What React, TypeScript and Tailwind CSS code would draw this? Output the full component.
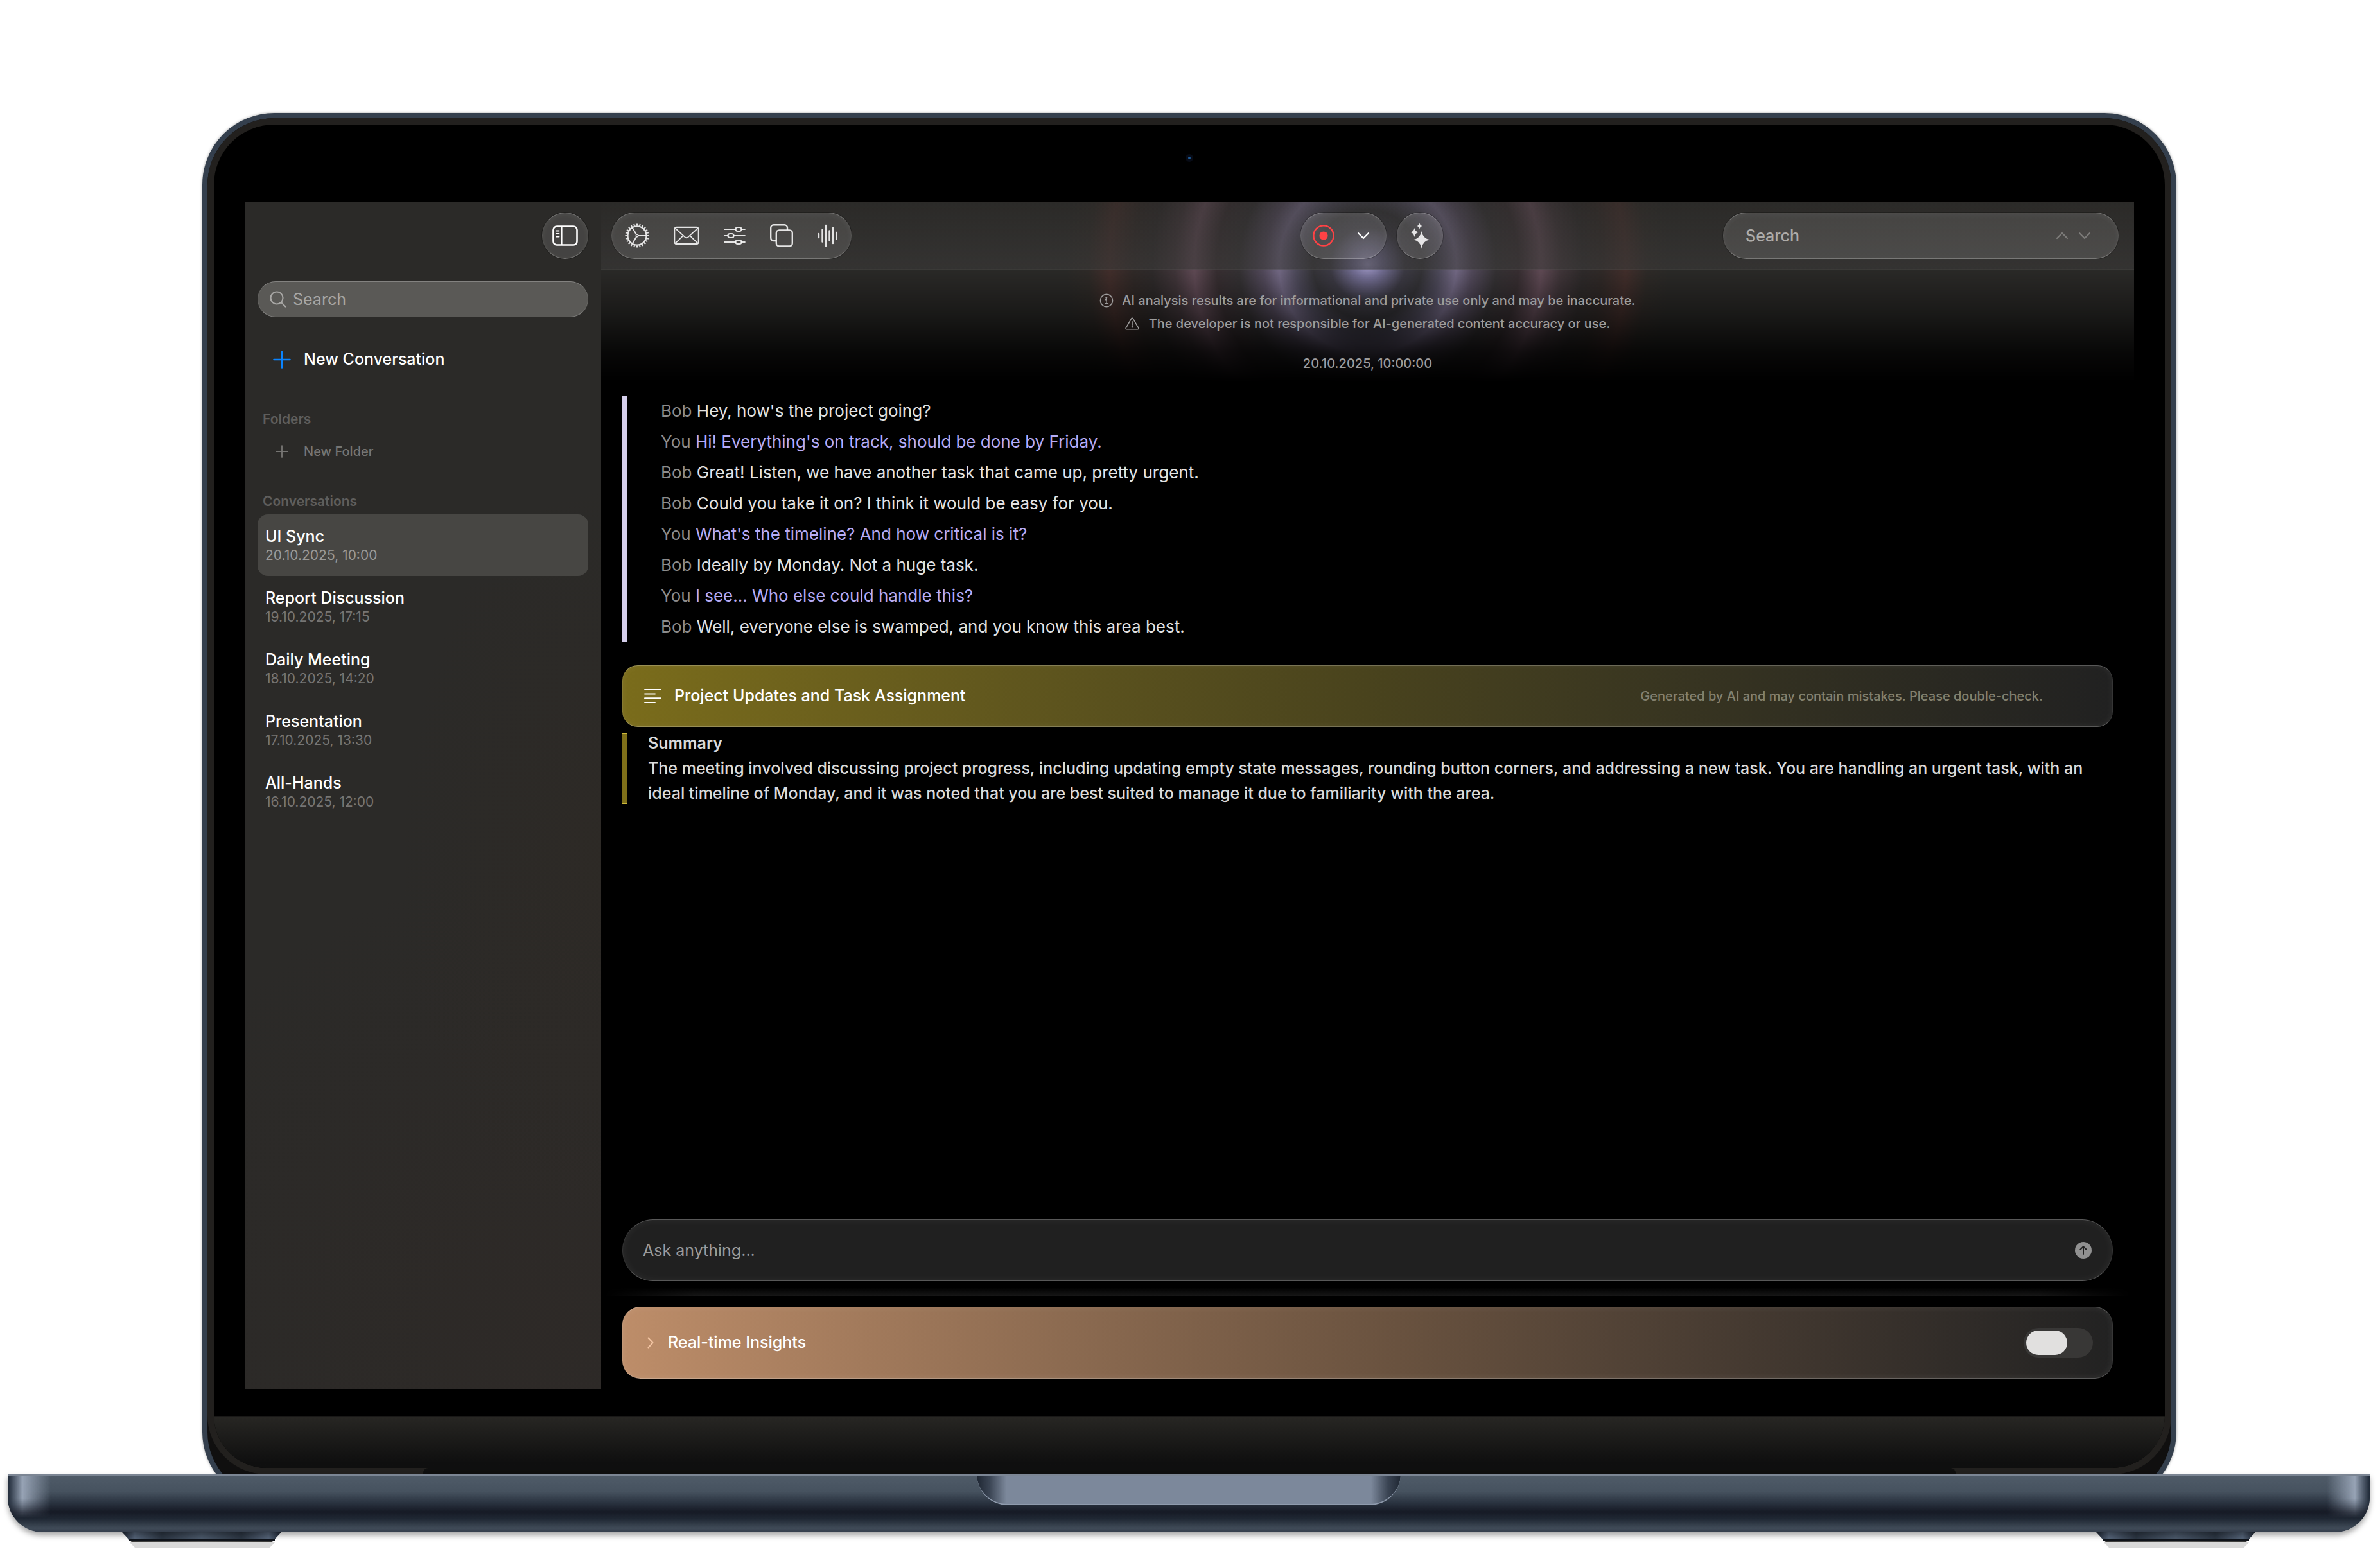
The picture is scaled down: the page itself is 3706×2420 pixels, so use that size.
import { useState } from 'react';
import type { ReactNode } from 'react';

type Message = { who: "Bob" | "You"; text: string };

const messages: Message[] = [
  { who: "Bob", text: "Hey, how's the project going?" },
  { who: "You", text: "Hi! Everything's on track, should be done by Friday." },
  { who: "Bob", text: "Great! Listen, we have another task that came up, pretty urgent." },
  { who: "Bob", text: "Could you take it on? I think it would be easy for you." },
  { who: "You", text: "What's the timeline? And how critical is it?" },
  { who: "Bob", text: "Ideally by Monday. Not a huge task." },
  { who: "You", text: "I see... Who else could handle this?" },
  { who: "Bob", text: "Well, everyone else is swamped, and you know this area best." },
];

const conversations = [
  { title: "UI Sync", date: "20.10.2025, 10:00" },
  { title: "Report Discussion", date: "19.10.2025, 17:15" },
  { title: "Daily Meeting", date: "18.10.2025, 14:20" },
  { title: "Presentation", date: "17.10.2025, 13:30" },
  { title: "All-Hands", date: "16.10.2025, 12:00" },
];

const glass =
  "border border-x-white/8 border-y-white/25 bg-white/12 shadow-[inset_0_2px_8px_rgba(255,255,255,0.06),0_0_0_1px_rgba(0,0,0,0.25)]";

/* ---------- icons ---------- */

function SidebarIcon() {
  return (
    <svg width="40" height="32" viewBox="0 0 40 32" fill="none" stroke="currentColor" strokeWidth="2.6" strokeLinecap="round">
      <rect x="1.5" y="1.5" width="37" height="29" rx="5.5" />
      <path d="M14.5 2v28" strokeWidth="2.2" />
      <path d="M6 8.5h4.5M6 13h4.5M6 17.5h4.5" strokeWidth="1.8" />
    </svg>
  );
}

function GearIcon() {
  const teeth = Array.from({ length: 24 }, (_, i) => i * 15);
  return (
    <svg width="38" height="38" viewBox="-19 -19 38 38" fill="none" stroke="currentColor" strokeWidth="2">
      <circle r="14.6" strokeWidth="2.4" />
      {teeth.map((a) => (
        <path key={a} d="M0 -15.5V-18.6" transform={`rotate(${a})`} />
      ))}
      <circle r="1.8" strokeWidth="1.4" />
      <path d="M2 0H14M-1 -1.8L-7.4 -12.4M-1 1.8L-7.4 12.4" />
    </svg>
  );
}

function MailIcon() {
  return (
    <svg width="40" height="30" viewBox="0 0 40 30" fill="none" stroke="currentColor" strokeWidth="2.2" strokeLinejoin="round">
      <rect x="1.2" y="1.8" width="37.6" height="26.4" rx="3.5" />
      <path d="M2.5 3.5L17.5 17.2Q20 19.2 22.5 17.2L37.5 3.5M2.5 26.8L14.8 14.8M37.5 26.8L25.2 14.8" strokeWidth="1.8" />
    </svg>
  );
}

function SlidersIcon() {
  return (
    <svg width="34" height="30" viewBox="0 0 34 30" fill="none" stroke="currentColor" strokeWidth="2.2" strokeLinecap="round">
      <path d="M1.2 5H18M28 5h4.8M1.2 15H6M16 15h16.8M1.2 25H18M28 25h4.8" />
      <rect x="18.5" y="2" width="9" height="6" rx="3" />
      <rect x="6.5" y="12" width="9" height="6" rx="3" />
      <rect x="18.5" y="22" width="9" height="6" rx="3" />
    </svg>
  );
}

function CopyIcon() {
  return (
    <svg width="36" height="36" viewBox="0 0 36 36" fill="none" stroke="currentColor" strokeWidth="2.4">
      <rect x="9.8" y="9.4" width="25" height="25" rx="4.5" />
      <path d="M9.5 26H5.7a4.5 4.5 0 0 1-4.5-4.5V5.7A4.5 4.5 0 0 1 5.7 1.2H22.5A4.5 4.5 0 0 1 27 5.7V9" />
    </svg>
  );
}

function WaveIcon() {
  return (
    <svg width="32" height="36" viewBox="0 0 32 36" fill="none" stroke="currentColor" strokeWidth="2.4" strokeLinecap="round">
      <path d="M2 15v6M7.5 8.5v19M13 2v32M18.5 10.5v15M24 6v24M29.5 13v10" />
    </svg>
  );
}

function RecordIcon() {
  return (
    <svg width="34" height="34" viewBox="0 0 34 34">
      <circle cx="17" cy="17" r="15.6" fill="none" stroke="#ff4245" strokeWidth="2.4" />
      <circle cx="17" cy="17" r="6.6" fill="#ff4245" />
    </svg>
  );
}

function Chevron({ className, d }: { className: string; d: string }) {
  return (
    <svg className={className} viewBox="0 0 20 12" fill="none" stroke="currentColor" strokeWidth="2.2" strokeLinecap="round" strokeLinejoin="round">
      <path d={d} />
    </svg>
  );
}

function SparklesIcon() {
  return (
    <svg width="32" height="40" viewBox="0 0 32 40" fill="currentColor">
      <path d="M18.5 13Q20.5 24.5 31.5 26.2Q20.5 28 18.5 39.5Q16.5 28 5.5 26.2Q16.5 24.5 18.5 13Z" />
      <path d="M7.5 8Q8.7 13.8 14 14.8Q8.7 15.8 7.5 22Q6.3 15.8 1 14.8Q6.3 13.8 7.5 8Z" />
      <path d="M15.5 0.5Q16.3 4.4 20 5Q16.3 5.7 15.5 9.6Q14.7 5.7 11 5Q14.7 4.4 15.5 0.5Z" />
    </svg>
  );
}

function PlusIcon({ className }: { className: string }) {
  return (
    <svg className={className} viewBox="0 0 28 28" fill="none" stroke="currentColor" strokeWidth="2.6" strokeLinecap="round">
      <path d="M14 1.5v25M1.5 14h25" />
    </svg>
  );
}

function SearchIcon() {
  return (
    <svg width="26" height="26" viewBox="0 0 26 26" fill="none" stroke="currentColor" strokeWidth="2.2" strokeLinecap="round">
      <circle cx="11" cy="11" r="9.5" />
      <path d="M18 18l6.5 6.5" />
    </svg>
  );
}

function InfoIcon() {
  return (
    <svg width="22" height="22" viewBox="0 0 22 22" fill="none" stroke="currentColor" strokeWidth="1.6" strokeLinecap="round">
      <circle cx="11" cy="11" r="9.6" />
      <circle cx="10.8" cy="6.4" r="0.7" fill="currentColor" />
      <path d="M9.2 9.6h2v6M8.8 15.8h4.6" />
    </svg>
  );
}

function WarningIcon() {
  return (
    <svg width="22" height="20" viewBox="0 0 22 20" fill="none" stroke="currentColor" strokeWidth="1.6" strokeLinecap="round" strokeLinejoin="round">
      <path d="M9.8 1.9a1.4 1.4 0 0 1 2.4 0l8.5 14.8a1.4 1.4 0 0 1-1.2 2.1h-17a1.4 1.4 0 0 1-1.2-2.1z" />
      <path d="M11 6.8v5.4" />
      <circle cx="11" cy="15.3" r="0.5" fill="currentColor" />
    </svg>
  );
}

function TextLinesIcon() {
  return (
    <svg className="text-white" width="27" height="24" viewBox="0 0 27 24" fill="none" stroke="currentColor" strokeWidth="2" strokeLinecap="round">
      <path d="M1 2h25M1 8.6h16M1 15.3h25M1 22h16" />
    </svg>
  );
}

/* ---------- pieces ---------- */

function ToolButton({ label, children }: { label: string; children: ReactNode }) {
  return (
    <button type="button" aria-label={label} className="text-white/85">
      {children}
    </button>
  );
}

function Sidebar() {
  const [selected, setSelected] = useState(0);

  return (
    <aside className="flex w-[555px] shrink-0 flex-col rounded-tl-sm bg-[#2b2a28] bg-[radial-gradient(circle_at_85%_95%,#30292680_0%,transparent_40%),radial-gradient(ellipse_at_100%_55%,#2f292380_0%,transparent_40%)] px-5">
      <div className="flex h-[106px] items-center justify-end">
        <button type="button" aria-label="Toggle sidebar" className={`flex size-[72px] items-center justify-center rounded-full text-white ${glass}`}>
          <SidebarIcon />
        </button>
      </div>

      <label className="mt-[18px] flex h-14 items-center gap-2.5 rounded-full border border-x-white/8 border-y-white/25 bg-[#5a5956] px-[18px] text-[#a8a7a5]">
        <SearchIcon />
        <input type="search" placeholder="Search" aria-label="Search conversations" className="min-w-0 flex-1 bg-transparent text-[25px] leading-8 outline-none placeholder:text-[#a8a7a5]" />
      </label>

      <button type="button" className="mt-12 flex h-9 items-center gap-5 pl-6 text-[25px] font-medium text-white">
        <PlusIcon className="size-7 text-[#0a84ff]" />
        New Conversation
      </button>

      <h2 className="mt-[59px] pl-2 text-[21px] leading-8 font-semibold text-[#5f5e5c]">Folders</h2>
      <button type="button" className="mt-[18px] flex h-8 items-center gap-6 pl-7 text-[20px] font-medium text-[#767573]">
        <PlusIcon className="size-5" />
        New Folder
      </button>

      <h2 className="mt-[46px] pl-2 text-[21px] leading-8 font-semibold text-[#5f5e5c]">Conversations</h2>
      <ul className="mt-1">
        {conversations.map((c, i) => (
          <li key={c.title}>
            <button
              type="button"
              onClick={() => setSelected(i)}
              className={`flex h-24 w-full flex-col justify-center rounded-2xl px-3 text-left ${
                i === selected ? "bg-[#474643] text-[#9b9a98]" : "text-[#767573]"
              }`}
            >
              <span className="text-[25px] leading-8 font-medium text-white">{c.title}</span>
              <span className="text-[21px] leading-7">{c.date}</span>
            </button>
          </li>
        ))}
      </ul>
    </aside>
  );
}

function Toolbar() {
  return (
    <header className="relative flex h-[106px] items-center justify-between border-b border-white/8 bg-linear-to-b from-[#2b2a28]/45 to-[#3a3938]/60 pr-6 pl-4">
      <div className={`flex h-[72px] items-center gap-[38px] rounded-full px-5 ${glass}`}>
        <ToolButton label="Settings"><GearIcon /></ToolButton>
        <ToolButton label="Mail"><MailIcon /></ToolButton>
        <ToolButton label="Filters"><SlidersIcon /></ToolButton>
        <ToolButton label="Copy"><CopyIcon /></ToolButton>
        <ToolButton label="Audio"><WaveIcon /></ToolButton>
      </div>

      <div className="mr-4 ml-auto flex gap-4 pr-[420px]">
        <div className={`flex h-[72px] w-[134px] items-center gap-[35px] rounded-full pl-[18px] ${glass}`}>
          <button type="button" aria-label="Record"><RecordIcon /></button>
          <button type="button" aria-label="Recording options" className="text-white">
            <Chevron className="h-3 w-5" d="M2 2L10 10L18 2" />
          </button>
        </div>
        <button type="button" aria-label="AI actions" className={`flex size-[72px] items-center justify-center rounded-full text-[#e6e5e6] ${glass}`}>
          <SparklesIcon />
        </button>
      </div>

      <div className={`flex h-[72px] w-[616px] items-center gap-[15px] rounded-full pr-[42px] pl-[34px] text-[#7d7c7a] ${glass}`}>
        <input type="search" placeholder="Search" aria-label="Search in conversation" className="min-w-0 flex-1 bg-transparent text-[25px] leading-8 font-medium text-white outline-none placeholder:text-[#adacaa]" />
        <button type="button" aria-label="Previous match"><Chevron className="h-3 w-5" d="M2 10L10 2L18 10" /></button>
        <button type="button" aria-label="Next match"><Chevron className="h-3 w-5" d="M2 2L10 10L18 2" /></button>
      </div>
    </header>
  );
}

function Notice() {
  return (
    <div className="flex flex-col items-center pt-[30px] text-[20px] leading-9 font-medium text-[#9d9c9c]">
      <p className="flex items-center gap-[13px]"><InfoIcon />AI analysis results are for informational and private use only and may be inaccurate.</p>
      <p className="flex items-center gap-[15px]"><WarningIcon />The developer is not responsible for AI-generated content accuracy or use.</p>
      <time className="mt-[26px]">20.10.2025, 10:00:00</time>
    </div>
  );
}

function Transcript() {
  return (
    <ul className="mt-8 border-l-8 border-[#d5cfec] pl-[52px] text-[26px] leading-[48px]">
      {messages.map((m) => (
        <li key={m.text} className={m.who === "You" ? "text-[#b5abf5]" : "text-[#e2e2e2]"}>
          <span className="text-[#8c8c8c]">{m.who}</span> {m.text}
        </li>
      ))}
    </ul>
  );
}

function Summary() {
  return (
    <section>
      <div className="mt-9 flex h-24 items-center rounded-3xl border border-x-white/10 border-y-white/25 bg-linear-to-r from-[#7a6c1b] via-[#49431d] to-[#212121] bg-origin-border pr-[108px] pl-[33px] shadow-[inset_0_0_12px_rgba(255,255,255,0.06)]">
        <TextLinesIcon />
        <h3 className="ml-5 flex-1 text-[25px] font-medium text-white">Project Updates and Task Assignment</h3>
        <span className="text-[20px] font-medium text-[#84816f]">Generated by AI and may contain mistakes. Please double-check.</span>
      </div>
      <div className="mt-[9px] flex gap-8">
        <div className="w-2 shrink-0 border-y-2 border-[#cdb93a] bg-[#7f7019]" />
        <div className="-my-[3px] text-[25px] leading-[39px] font-medium text-[#dadada]">
          <h4 className="font-semibold">Summary</h4>
          <p>
            The meeting involved discussing project progress, including updating empty state messages, rounding button corners, and addressing a new task. You are handling an urgent task, with an ideal timeline of Monday, and it was noted that you are best suited to manage it due to familiarity with the area.
          </p>
        </div>
      </div>
    </section>
  );
}

function Composer() {
  const [question, setQuestion] = useState("");

  return (
    <form className="mt-auto flex h-24 items-center rounded-full border border-x-white/10 border-y-white/25 bg-[#202020] pr-8 pl-[31px] shadow-[inset_0_0_14px_rgba(255,255,255,0.06)]" onSubmit={(e) => e.preventDefault()}>
      <input
        value={question}
        onChange={(e) => setQuestion(e.target.value)}
        placeholder="Ask anything..."
        aria-label="Ask anything"
        className="min-w-0 flex-1 bg-transparent text-[25px] leading-8 text-white outline-none placeholder:text-[#9b9b9b]"
      />
      <button type="submit" aria-label="Send">
        <svg width="26" height="26" viewBox="0 0 26 26" fill="none" stroke="#202020" strokeWidth="2" strokeLinecap="round" strokeLinejoin="round">
          <circle cx="13" cy="13" r="13" fill="#909090" stroke="none" />
          <path d="M13 19V7.5M8.2 12L13 7.2L17.8 12" />
        </svg>
      </button>
    </form>
  );
}

function Insights() {
  const [live, setLive] = useState(false);

  return (
    <section className="mb-4 flex h-28 items-center justify-between rounded-[28px] border border-x-white/10 border-y-white/25 bg-linear-to-r from-[#bd8d69] via-[#69523f] via-52% to-[#222222] bg-origin-border pr-[30px] pl-[38px] shadow-[inset_0_0_12px_rgba(255,255,255,0.08)]">
      <button type="button" aria-expanded="false" className="flex items-center gap-[22px] text-[25px] font-medium text-white">
        <svg width="10" height="18" viewBox="0 0 10 18" fill="none" stroke="#f4c6a4" strokeWidth="2" strokeLinecap="round" strokeLinejoin="round">
          <path d="M1.5 1.5L8.5 9L1.5 16.5" />
        </svg>
        Real-time Insights
      </button>
      <input
        type="checkbox"
        role="switch"
        aria-label="Real-time insights"
        checked={live}
        onChange={(e) => setLive(e.target.checked)}
        className="flex h-[46px] w-[108px] appearance-none items-center rounded-full bg-[#383736] px-1 before:h-[38px] before:w-16 before:rounded-full before:bg-[#e1e0df] checked:justify-end"
      />
    </section>
  );
}

function Workspace() {
  return (
    <main className="relative flex min-w-0 flex-1 flex-col bg-black">
      {/* Pulse rings behind the toolbar, fading into the page */}
      <div className="absolute inset-x-0 top-0 h-[280px] bg-[#2b2a28] bg-[radial-gradient(circle_at_50%_98px,#a49dcc_0px,#777299_22px,#3d3b45_58px,#353438_85px,#4f4b5c_112px,#746a86_138px,#544b5d_162px,#353234_200px,#382f32_235px,#614b56_270px,#41363a_300px,#2f2b2b_335px,#312a28_365px,#432f2c_402px,#2f2b28_435px,#2b2a28_470px)] [mask-image:linear-gradient(to_bottom,black_36%,rgba(0,0,0,0.6)_62%,rgba(0,0,0,0.18)_84%,transparent)]" />
      <Toolbar />
      <div className="relative flex flex-1 flex-col px-[33px]">
        <Notice />
        <Transcript />
        <Summary />
        <Composer />
        <div className="-mx-7 mt-2.5 mb-4 h-3.5 bg-linear-to-b from-transparent to-[#181818] [mask-image:linear-gradient(to_right,transparent,black_6%,black_94%,transparent)]" />
        <Insights />
      </div>
    </main>
  );
}

function Foot() {
  return (
    <svg width="248" height="34" viewBox="0 0 248 34">
      <defs>
        <linearGradient id="foot" x1="0" x2="1" y1="0" y2="0">
          <stop offset="0" stopColor="#1d2532" />
          <stop offset="0.08" stopColor="#56657a" />
          <stop offset="0.25" stopColor="#2c3643" />
          <stop offset="0.5" stopColor="#4c5a6c" />
          <stop offset="0.75" stopColor="#2c3643" />
          <stop offset="0.92" stopColor="#56657a" />
          <stop offset="1" stopColor="#1d2532" />
        </linearGradient>
        <linearGradient id="rubber" x1="0" x2="1" y1="0" y2="0">
          <stop offset="0" stopColor="#3a3a38" />
          <stop offset="0.5" stopColor="#5e5e5c" />
          <stop offset="1" stopColor="#3a3a38" />
        </linearGradient>
      </defs>
      <path d="M12 16H238L230 24H20Z" fill="#000" opacity="0.15" />
      <path d="M0 0H248L236 13H12Z" fill="url(#foot)" />
      <path d="M11 12H238L232 16H16Z" fill="url(#rubber)" />
      <path d="M11 12H238" stroke="#10141b" strokeWidth="2" />
    </svg>
  );
}

function Base() {
  return (
    <div className="relative z-10 mr-4 ml-3 -mt-11">
      <div className="relative h-[90px] overflow-hidden rounded-b-[54px] border-t-2 border-[#7c8694] shadow-[0_5px_8px_rgba(0,0,0,0.35)]">
        <div className="absolute inset-0 bg-[linear-gradient(to_bottom,#4f5b68_0%,#46525f_28%,#2a3340_48%,#161a25_64%,#1f2733_76%,#404b58_93%,#343d4b_100%)]" />
        <div className="absolute inset-y-0 left-0 w-24 bg-linear-to-r from-[#1f2937] via-[#97a3b5] via-24% to-transparent to-70% [mask-image:linear-gradient(to_bottom,black_40%,transparent_75%)]" />
        <div className="absolute inset-y-0 right-0 w-24 bg-linear-to-l from-[#1f2937] via-[#97a3b5] via-24% to-transparent to-70% [mask-image:linear-gradient(to_bottom,black_40%,transparent_75%)]" />
        {/* Lid notch */}
        <div className="absolute inset-x-0 -top-0.5 mx-auto h-12 w-[660px] rounded-b-[48px] border-b-2 border-[#8f9bad] bg-[linear-gradient(to_right,#1f2733_0%,#3a4453_3%,#7c889b_7%,#7c889b_93%,#3a4453_97%,#1f2733_100%)]" />
      </div>
      <div className="flex justify-between px-[178px]">
        <Foot />
        <Foot />
      </div>
    </div>
  );
}

function App() {
  return (
    <div className="flex min-h-screen w-full flex-col overflow-hidden bg-white pt-44 font-[Inter,sans-serif] antialiased">
      {/* Lid */}
      <div className="mr-[317px] ml-[315px] flex flex-1 flex-col rounded-t-[112px] rounded-b-[110px] border-8 border-[#343f4d] bg-[#100f0f] pb-[34px] shadow-[0_0_4px_rgba(0,0,0,0.35)]">
        <div className="flex flex-1 flex-col rounded-t-[104px] rounded-b-[92px] bg-[#22201e] p-2.5">
          <div className="flex flex-1 flex-col overflow-hidden rounded-t-[94px] rounded-b-[82px] bg-black">
            <div className="flex h-[120px] items-center justify-center pb-4">
              <span className="flex size-3 items-center justify-center rounded-full bg-[#070b16]">
                <span className="size-1 rounded-full bg-[#1d5a96]" />
              </span>
            </div>
            <div className="flex flex-1 px-12">
              <Sidebar />
              <Workspace />
            </div>
            <div className="mt-[42px] h-[81px] border-t-2 border-[#191817] bg-linear-to-b from-[#272623] to-[#0f0f0f] to-90%" />
          </div>
        </div>
        <div className="mx-auto -mt-2.5 h-3 w-[78%] rounded-t-lg bg-[#0f0f0f]" />
      </div>
      <Base />
    </div>
  );
}

export default App;
